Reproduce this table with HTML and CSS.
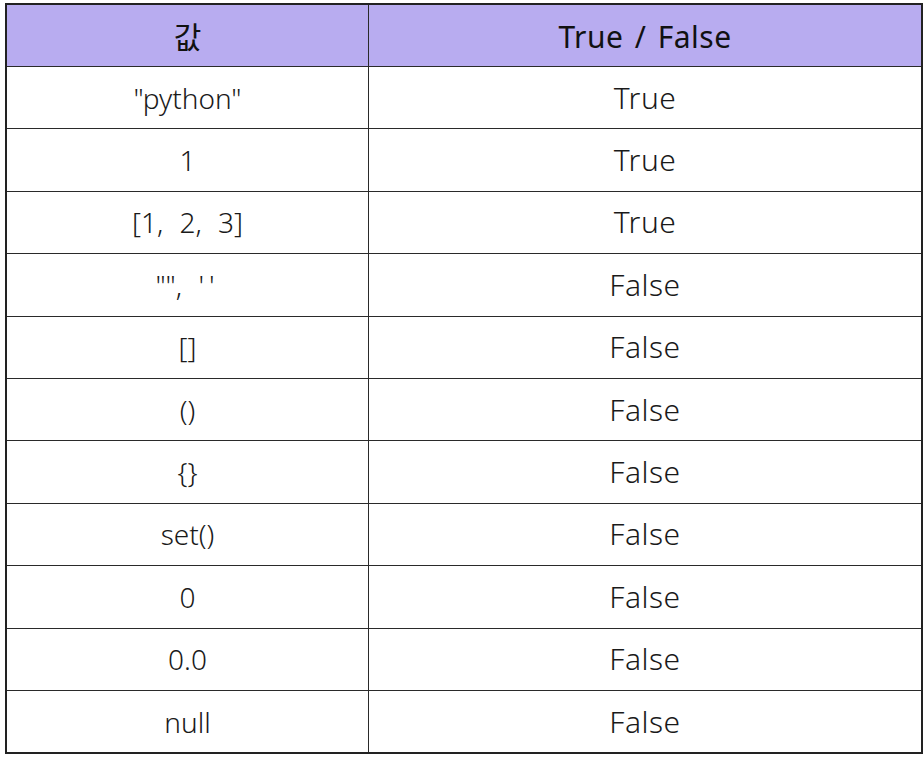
FILE: index.html
```html
<!DOCTYPE html>
<html lang="ko">
<head>
<meta charset="utf-8">
<link rel="stylesheet" href="styles.css">
</head>
<body>
<table class="tf-table">
  <thead>
    <tr class="head-row"><th class="col-value">값</th><th class="col-bool">True / False</th></tr>
  </thead>
  <tbody>
    <tr><td>"python"</td><td>True</td></tr>
    <tr><td>1</td><td>True</td></tr>
    <tr><td>[1, 2, 3]</td><td>True</td></tr>
    <tr><td>"", <span class="sq">''</span></td><td>False</td></tr>
    <tr><td>[]</td><td>False</td></tr>
    <tr><td>()</td><td>False</td></tr>
    <tr><td>{}</td><td>False</td></tr>
    <tr><td>set()</td><td>False</td></tr>
    <tr><td>0</td><td>False</td></tr>
    <tr><td>0.0</td><td>False</td></tr>
    <tr><td>null</td><td>False</td></tr>
  </tbody>
</table>
</body>
</html>
```
FILE: styles.css
```css
html, body {
  margin: 0;
  padding: 0;
  background: #ffffff;
}
body {
  padding: 3px 0 0 5px;
  font-family: "Noto Sans", "Noto Sans CJK KR", sans-serif;
  color: #1a1a1a;
}
.tf-table {
  border-collapse: collapse;
  width: 913px;
  table-layout: fixed;
  border: 2px solid #222;
}
.tf-table th,
.tf-table td {
  border: 1px solid #2a2a2a;
  text-align: center;
  vertical-align: middle;
  padding: 0;
  font-size: 28px;
  font-weight: 300;
  line-height: 1;
  word-spacing: 9px;
}
.tf-table th {
  background: #b8acf0;
  color: #111;
  font-weight: 400;
  height: 58px;
  padding-top: 3px;
}
.tf-table th.col-value {
  font-size: 30px;
}
.tf-table td {
  height: 61.4px;
}
.tf-table td:last-child,
.tf-table th:last-child {
  font-size: 30px;
  letter-spacing: 0.5px;
  word-spacing: 3px;
}
.sq {
  letter-spacing: 5px;
}
.col-value { width: 361px; }
.col-bool { width: 552px; }
```
